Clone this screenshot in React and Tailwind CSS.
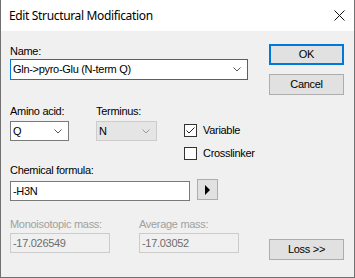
import React from "react";

const ui = { fontFamily: '"Liberation Sans", Arial, sans-serif' };
const title = { fontFamily: '"Noto Sans", "Open Sans", sans-serif' };

function Chevron({ color = "#5a5a5a" }) {
  return (
    <svg width="8" height="5" viewBox="0 0 8 5" className="shrink-0">
      <polyline points="0.5,0.5 4,4 7.5,0.5" fill="none" stroke={color} strokeWidth="1" />
    </svg>
  );
}

function Combo({ value, className, border, disabled }) {
  return (
    <div
      className={`flex items-center justify-between border pl-[2px] pr-[6px] ${border} ${
        disabled ? "bg-[#e5e5e5]" : "bg-white"
      } ${className}`}
    >
      <span className="text-[11px] tracking-[-0.3px] text-black">{value}</span>
      <Chevron color={disabled ? "#9a9a9a" : "#5a5a5a"} />
    </div>
  );
}

function Checkbox({ checked, label }) {
  return (
    <div className="flex items-center gap-[6px] h-[13px]">
      <div className="w-[13px] h-[13px] border border-[#333333] bg-white flex items-center justify-center">
        {checked && (
          <svg width="11" height="11" viewBox="0 0 11 11">
            <polyline points="1.5,5.5 4,8 9.5,2.5" fill="none" stroke="#222" strokeWidth="1" />
          </svg>
        )}
      </div>
      <span className="text-[11px] tracking-[-0.3px] leading-[13px]">{label}</span>
    </div>
  );
}

function Button({ children, primary, className = "" }) {
  return (
    <div
      className={`w-[75px] h-[21px] flex items-center justify-center bg-[#e1e1e1] text-[11px] tracking-[-0.3px] ${
        primary ? "border-2 border-[#0078d7]" : "border border-[#adadad]"
      } ${className}`}
    >
      {children}
    </div>
  );
}

export default function App() {
  return (
    <div className="w-[355px] h-[278px] flex flex-col border-x border-b border-[#707070] bg-[#f0f0f0] text-black" style={ui}>
      <div className="h-[31px] shrink-0 bg-white flex items-center justify-between pl-[8px] pr-[9px]">
        <span className="text-[12px] tracking-[-0.35px]" style={title}>
          Edit Structural Modification
        </span>
        <svg width="11" height="11" viewBox="0 0 11 11">
          <path d="M0.5 0.5 L10.5 10.5 M10.5 0.5 L0.5 10.5" stroke="#111" strokeWidth="1" />
        </svg>
      </div>

      <div className="flex flex-1">
        <div className="ml-[9px] w-[238px] flex flex-col">
          <div className="mt-[14px] h-[13px] leading-[13px] text-[11px] tracking-[-0.3px]">Name:</div>
          <Combo
            value="Gln->pyro-Glu (N-term Q)"
            className="mt-[1px] h-[21px] w-[238px]"
            border="border-[#0078d7]"
          />

          <div className="mt-[25px] flex">
            <div className="w-[59px] flex flex-col">
              <div className="h-[13px] leading-[13px] text-[11px] tracking-[-0.3px]">Amino acid:</div>
              <Combo value="Q" className="mt-[3px] h-[20px] w-[59px]" border="border-[#7a7a7a]" />
            </div>
            <div className="ml-[27px] w-[61px] flex flex-col">
              <div className="h-[13px] leading-[13px] text-[11px] tracking-[-0.3px]">Terminus:</div>
              <Combo value="N" className="mt-[3px] h-[20px] w-[61px]" border="border-[#cccccc]" disabled />
            </div>
            <div className="ml-[27px] pt-[19px] flex flex-col gap-[10px]">
              <Checkbox checked label="Variable" />
              <Checkbox label="Crosslinker" />
            </div>
          </div>

          <div className="mt-[4px] h-[13px] leading-[13px] text-[11px] tracking-[-0.3px]">Chemical formula:</div>
          <div className="mt-[2px] flex items-start">
            <div className="mt-[2px] w-[180px] h-[20px] border border-[#7a7a7a] bg-white flex items-center pl-[2px] text-[11px] tracking-[-0.3px]">
              -H3N
            </div>
            <div className="ml-[7px] w-[21px] h-[21px] border border-[#adadad] bg-[#e1e1e1] flex items-center justify-center">
              <svg width="6" height="10" viewBox="0 0 6 10">
                <polygon points="0,0 5,5 0,10" fill="#000" />
              </svg>
            </div>
          </div>

          <div className="mt-[17px] flex">
            <div className="w-[100px] flex flex-col">
              <div className="h-[13px] leading-[13px] text-[11px] tracking-[-0.3px] text-[#a0a0a0]">Monoisotopic mass:</div>
              <div className="mt-[2px] h-[20px] border border-[#cccccc] flex items-center pl-[2px] text-[11px] tracking-[-0.3px] text-[#6d6d6d]">
                -17.026549
              </div>
            </div>
            <div className="ml-[29px] w-[100px] flex flex-col">
              <div className="h-[13px] leading-[13px] text-[11px] tracking-[-0.3px] text-[#a0a0a0]">Average mass:</div>
              <div className="mt-[2px] h-[20px] border border-[#cccccc] flex items-center pl-[2px] text-[11px] tracking-[-0.3px] text-[#6d6d6d]">
                -17.03052
              </div>
            </div>
          </div>
        </div>

        <div className="ml-[21px] w-[75px] flex flex-col pt-[13px]">
          <Button primary>OK</Button>
          <Button className="mt-[9px]">Cancel</Button>
          <Button className="mt-[144px]">Loss &gt;&gt;</Button>
        </div>
      </div>
    </div>
  );
}
